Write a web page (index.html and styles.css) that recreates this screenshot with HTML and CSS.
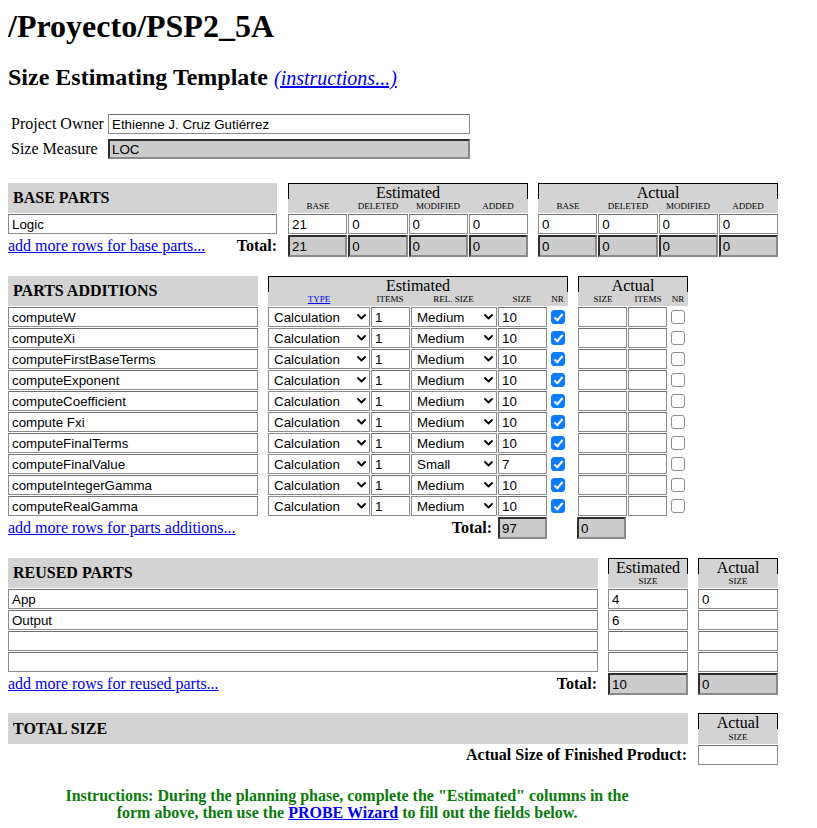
FILE: index.html
```html
<!DOCTYPE html>
<html lang="es">
<head>
<meta charset="utf-8">
<title>Size Estimating Template</title>
<link rel="stylesheet" href="styles.css">
</head>
<body>
<h1 class="title">/Proyecto/PSP2_5A</h1>
<h2 class="subtitle">Size Estimating Template <a class="instr" href="#">(instructions...)</a></h2>

<div class="owner">
  <div class="owner-row"><span class="lbl">Project Owner</span><input class="in owner-in" value="Ethienne J. Cruz Gutiérrez"></div>
  <div class="owner-row"><span class="lbl">Size Measure</span><input class="in ro owner-in" value="LOC" readonly></div>
</div>

<!-- BASE PARTS -->
<div class="sec sec-base">
  <div class="row head">
    <div class="sec-head w269">BASE PARTS</div>
    <div class="grp w240 ml11">
      <div class="grp-title">Estimated</div>
      <div class="subs"><span class="c60">BASE</span><span class="c60">DELETED</span><span class="c60">MODIFIED</span><span class="c60">ADDED</span></div>
    </div>
    <div class="grp w240 ml10">
      <div class="grp-title">Actual</div>
      <div class="subs"><span class="c60">BASE</span><span class="c60">DELETED</span><span class="c60">MODIFIED</span><span class="c60">ADDED</span></div>
    </div>
  </div>
  <div class="row">
    <input class="in w269" value="Logic">
    <div class="blk w240 ml11"><input class="in f1" value="21"><input class="in f1" value="0"><input class="in f1" value="0"><input class="in f1" value="0"></div>
    <div class="blk w240 ml10"><input class="in f1" value="0"><input class="in f1" value="0"><input class="in f1" value="0"><input class="in f1" value="0"></div>
  </div>
  <div class="row tot">
    <div class="tot-lbl w269"><a href="#">add more rows for base parts...</a><b>Total:</b></div>
    <div class="blk w240 ml11"><input class="in ro f1" value="21" readonly><input class="in ro f1" value="0" readonly><input class="in ro f1" value="0" readonly><input class="in ro f1" value="0" readonly></div>
    <div class="blk w240 ml10"><input class="in ro f1" value="0" readonly><input class="in ro f1" value="0" readonly><input class="in ro f1" value="0" readonly><input class="in ro f1" value="0" readonly></div>
  </div>
</div>

<!-- PARTS ADDITIONS -->
<div class="sec sec-add">
  <div class="row head">
    <div class="sec-head w250">PARTS ADDITIONS</div>
    <div class="grp w300 ml10">
      <div class="grp-title">Estimated</div>
      <div class="subs"><a class="c102" href="#">TYPE</a><span class="c40">ITEMS</span><span class="c87">REL. SIZE</span><span class="c50">SIZE</span><span class="c21">NR</span></div>
    </div>
    <div class="grp w110 ml10">
      <div class="grp-title">Actual</div>
      <div class="subs"><span class="c50">SIZE</span><span class="c40">ITEMS</span><span class="c20">NR</span></div>
    </div>
  </div>

  <div class="row">
    <input class="in w250" value="computeW">
    <div class="blk w300 ml10">
      <span class="sel w102"><select><option>Calculation</option></select><svg class="chev" width="9" height="6" viewBox="0 0 9 6"><path d="M1 1l3.5 3.5L8 1" fill="none" stroke="#000" stroke-width="1.8" stroke-linecap="round" stroke-linejoin="round"/></svg></span>
      <input class="in w39" value="1">
      <span class="sel w86"><select><option>Medium</option></select><svg class="chev" width="9" height="6" viewBox="0 0 9 6"><path d="M1 1l3.5 3.5L8 1" fill="none" stroke="#000" stroke-width="1.8" stroke-linecap="round" stroke-linejoin="round"/></svg></span>
      <input class="in w49" value="10">
      <span class="nr"><input type="checkbox" class="cb" checked></span>
    </div>
    <div class="blk w110 ml10"><input class="in w49" value=""><input class="in w39" value=""><span class="nr"><input type="checkbox" class="cb"></span></div>
  </div>
  <div class="row">
    <input class="in w250" value="computeXi">
    <div class="blk w300 ml10">
      <span class="sel w102"><select><option>Calculation</option></select><svg class="chev" width="9" height="6" viewBox="0 0 9 6"><path d="M1 1l3.5 3.5L8 1" fill="none" stroke="#000" stroke-width="1.8" stroke-linecap="round" stroke-linejoin="round"/></svg></span>
      <input class="in w39" value="1">
      <span class="sel w86"><select><option>Medium</option></select><svg class="chev" width="9" height="6" viewBox="0 0 9 6"><path d="M1 1l3.5 3.5L8 1" fill="none" stroke="#000" stroke-width="1.8" stroke-linecap="round" stroke-linejoin="round"/></svg></span>
      <input class="in w49" value="10">
      <span class="nr"><input type="checkbox" class="cb" checked></span>
    </div>
    <div class="blk w110 ml10"><input class="in w49" value=""><input class="in w39" value=""><span class="nr"><input type="checkbox" class="cb"></span></div>
  </div>
  <div class="row">
    <input class="in w250" value="computeFirstBaseTerms">
    <div class="blk w300 ml10">
      <span class="sel w102"><select><option>Calculation</option></select><svg class="chev" width="9" height="6" viewBox="0 0 9 6"><path d="M1 1l3.5 3.5L8 1" fill="none" stroke="#000" stroke-width="1.8" stroke-linecap="round" stroke-linejoin="round"/></svg></span>
      <input class="in w39" value="1">
      <span class="sel w86"><select><option>Medium</option></select><svg class="chev" width="9" height="6" viewBox="0 0 9 6"><path d="M1 1l3.5 3.5L8 1" fill="none" stroke="#000" stroke-width="1.8" stroke-linecap="round" stroke-linejoin="round"/></svg></span>
      <input class="in w49" value="10">
      <span class="nr"><input type="checkbox" class="cb" checked></span>
    </div>
    <div class="blk w110 ml10"><input class="in w49" value=""><input class="in w39" value=""><span class="nr"><input type="checkbox" class="cb"></span></div>
  </div>
  <div class="row">
    <input class="in w250" value="computeExponent">
    <div class="blk w300 ml10">
      <span class="sel w102"><select><option>Calculation</option></select><svg class="chev" width="9" height="6" viewBox="0 0 9 6"><path d="M1 1l3.5 3.5L8 1" fill="none" stroke="#000" stroke-width="1.8" stroke-linecap="round" stroke-linejoin="round"/></svg></span>
      <input class="in w39" value="1">
      <span class="sel w86"><select><option>Medium</option></select><svg class="chev" width="9" height="6" viewBox="0 0 9 6"><path d="M1 1l3.5 3.5L8 1" fill="none" stroke="#000" stroke-width="1.8" stroke-linecap="round" stroke-linejoin="round"/></svg></span>
      <input class="in w49" value="10">
      <span class="nr"><input type="checkbox" class="cb" checked></span>
    </div>
    <div class="blk w110 ml10"><input class="in w49" value=""><input class="in w39" value=""><span class="nr"><input type="checkbox" class="cb"></span></div>
  </div>
  <div class="row">
    <input class="in w250" value="computeCoefficient">
    <div class="blk w300 ml10">
      <span class="sel w102"><select><option>Calculation</option></select><svg class="chev" width="9" height="6" viewBox="0 0 9 6"><path d="M1 1l3.5 3.5L8 1" fill="none" stroke="#000" stroke-width="1.8" stroke-linecap="round" stroke-linejoin="round"/></svg></span>
      <input class="in w39" value="1">
      <span class="sel w86"><select><option>Medium</option></select><svg class="chev" width="9" height="6" viewBox="0 0 9 6"><path d="M1 1l3.5 3.5L8 1" fill="none" stroke="#000" stroke-width="1.8" stroke-linecap="round" stroke-linejoin="round"/></svg></span>
      <input class="in w49" value="10">
      <span class="nr"><input type="checkbox" class="cb" checked></span>
    </div>
    <div class="blk w110 ml10"><input class="in w49" value=""><input class="in w39" value=""><span class="nr"><input type="checkbox" class="cb"></span></div>
  </div>
  <div class="row">
    <input class="in w250" value="compute Fxi">
    <div class="blk w300 ml10">
      <span class="sel w102"><select><option>Calculation</option></select><svg class="chev" width="9" height="6" viewBox="0 0 9 6"><path d="M1 1l3.5 3.5L8 1" fill="none" stroke="#000" stroke-width="1.8" stroke-linecap="round" stroke-linejoin="round"/></svg></span>
      <input class="in w39" value="1">
      <span class="sel w86"><select><option>Medium</option></select><svg class="chev" width="9" height="6" viewBox="0 0 9 6"><path d="M1 1l3.5 3.5L8 1" fill="none" stroke="#000" stroke-width="1.8" stroke-linecap="round" stroke-linejoin="round"/></svg></span>
      <input class="in w49" value="10">
      <span class="nr"><input type="checkbox" class="cb" checked></span>
    </div>
    <div class="blk w110 ml10"><input class="in w49" value=""><input class="in w39" value=""><span class="nr"><input type="checkbox" class="cb"></span></div>
  </div>
  <div class="row">
    <input class="in w250" value="computeFinalTerms">
    <div class="blk w300 ml10">
      <span class="sel w102"><select><option>Calculation</option></select><svg class="chev" width="9" height="6" viewBox="0 0 9 6"><path d="M1 1l3.5 3.5L8 1" fill="none" stroke="#000" stroke-width="1.8" stroke-linecap="round" stroke-linejoin="round"/></svg></span>
      <input class="in w39" value="1">
      <span class="sel w86"><select><option>Medium</option></select><svg class="chev" width="9" height="6" viewBox="0 0 9 6"><path d="M1 1l3.5 3.5L8 1" fill="none" stroke="#000" stroke-width="1.8" stroke-linecap="round" stroke-linejoin="round"/></svg></span>
      <input class="in w49" value="10">
      <span class="nr"><input type="checkbox" class="cb" checked></span>
    </div>
    <div class="blk w110 ml10"><input class="in w49" value=""><input class="in w39" value=""><span class="nr"><input type="checkbox" class="cb"></span></div>
  </div>
  <div class="row">
    <input class="in w250" value="computeFinalValue">
    <div class="blk w300 ml10">
      <span class="sel w102"><select><option>Calculation</option></select><svg class="chev" width="9" height="6" viewBox="0 0 9 6"><path d="M1 1l3.5 3.5L8 1" fill="none" stroke="#000" stroke-width="1.8" stroke-linecap="round" stroke-linejoin="round"/></svg></span>
      <input class="in w39" value="1">
      <span class="sel w86"><select><option>Small</option></select><svg class="chev" width="9" height="6" viewBox="0 0 9 6"><path d="M1 1l3.5 3.5L8 1" fill="none" stroke="#000" stroke-width="1.8" stroke-linecap="round" stroke-linejoin="round"/></svg></span>
      <input class="in w49" value="7">
      <span class="nr"><input type="checkbox" class="cb" checked></span>
    </div>
    <div class="blk w110 ml10"><input class="in w49" value=""><input class="in w39" value=""><span class="nr"><input type="checkbox" class="cb"></span></div>
  </div>
  <div class="row">
    <input class="in w250" value="computeIntegerGamma">
    <div class="blk w300 ml10">
      <span class="sel w102"><select><option>Calculation</option></select><svg class="chev" width="9" height="6" viewBox="0 0 9 6"><path d="M1 1l3.5 3.5L8 1" fill="none" stroke="#000" stroke-width="1.8" stroke-linecap="round" stroke-linejoin="round"/></svg></span>
      <input class="in w39" value="1">
      <span class="sel w86"><select><option>Medium</option></select><svg class="chev" width="9" height="6" viewBox="0 0 9 6"><path d="M1 1l3.5 3.5L8 1" fill="none" stroke="#000" stroke-width="1.8" stroke-linecap="round" stroke-linejoin="round"/></svg></span>
      <input class="in w49" value="10">
      <span class="nr"><input type="checkbox" class="cb" checked></span>
    </div>
    <div class="blk w110 ml10"><input class="in w49" value=""><input class="in w39" value=""><span class="nr"><input type="checkbox" class="cb"></span></div>
  </div>
  <div class="row">
    <input class="in w250" value="computeRealGamma">
    <div class="blk w300 ml10">
      <span class="sel w102"><select><option>Calculation</option></select><svg class="chev" width="9" height="6" viewBox="0 0 9 6"><path d="M1 1l3.5 3.5L8 1" fill="none" stroke="#000" stroke-width="1.8" stroke-linecap="round" stroke-linejoin="round"/></svg></span>
      <input class="in w39" value="1">
      <span class="sel w86"><select><option>Medium</option></select><svg class="chev" width="9" height="6" viewBox="0 0 9 6"><path d="M1 1l3.5 3.5L8 1" fill="none" stroke="#000" stroke-width="1.8" stroke-linecap="round" stroke-linejoin="round"/></svg></span>
      <input class="in w49" value="10">
      <span class="nr"><input type="checkbox" class="cb" checked></span>
    </div>
    <div class="blk w110 ml10"><input class="in w49" value=""><input class="in w39" value=""><span class="nr"><input type="checkbox" class="cb"></span></div>
  </div>

  <div class="row tot">
    <div class="tot-lbl w490 pr6"><a href="#">add more rows for parts additions...</a><b>Total:</b></div>
    <input class="in ro w49" value="97" readonly>
    <span class="w30"></span>
    <input class="in ro w49" value="0" readonly>
  </div>
</div>

<!-- REUSED PARTS -->
<div class="sec sec-reused">
  <div class="row head">
    <div class="sec-head w590">REUSED PARTS</div>
    <div class="grp w80 ml10">
      <div class="grp-title">Estimated</div>
      <div class="subs"><span class="c80">SIZE</span></div>
    </div>
    <div class="grp w80 ml10">
      <div class="grp-title">Actual</div>
      <div class="subs"><span class="c80">SIZE</span></div>
    </div>
  </div>
  <div class="row"><input class="in w590" value="App"><input class="in w80 ml10" value="4"><input class="in w80 ml10" value="0"></div>
  <div class="row"><input class="in w590" value="Output"><input class="in w80 ml10" value="6"><input class="in w80 ml10" value=""></div>
  <div class="row"><input class="in w590" value=""><input class="in w80 ml10" value=""><input class="in w80 ml10" value=""></div>
  <div class="row"><input class="in w590" value=""><input class="in w80 ml10" value=""><input class="in w80 ml10" value=""></div>
  <div class="row tot">
    <div class="tot-lbl w600 pr11"><a href="#">add more rows for reused parts...</a><b>Total:</b></div>
    <input class="in ro w80" value="10" readonly>
    <input class="in ro w80 ml10" value="0" readonly>
  </div>
</div>

<!-- TOTAL SIZE -->
<div class="sec sec-total">
  <div class="row head head-tall">
    <div class="sec-head w680">TOTAL SIZE</div>
    <div class="grp w80 ml10">
      <div class="grp-title">Actual</div>
      <div class="subs"><span class="c80">SIZE</span></div>
    </div>
  </div>
  <div class="row">
    <div class="final-lbl w680"><b>Actual Size of Finished Product:</b></div>
    <input class="in w80 ml10" value="">
  </div>
</div>

<p class="instructions">Instructions: During the planning phase, complete the "Estimated" columns in the form above, then use the <a href="#">PROBE Wizard</a> to fill out the fields below.</p>
</body>
</html>
```

FILE: styles.css
```css
* { box-sizing: border-box; }

body {
  margin: 8px;
  font-family: "Liberation Serif", "Times New Roman", serif;
  font-size: 16px;
  color: #000;
  background: #fff;
}

a { color: #0000ee; }

.title {
  margin: 0 0 18px;
  font-size: 32px;
  line-height: 37px;
  font-weight: bold;
}

.subtitle {
  margin: 0;
  font-size: 24px;
  line-height: 29px;
  font-weight: bold;
}

.instr {
  font-size: 20px;
  font-style: italic;
  font-weight: normal;
}

/* owner block */
.owner { margin-top: 21px; display: flex; flex-direction: column; gap: 5px; }
.owner-row { display: flex; align-items: center; height: 20px; }
.lbl { width: 100px; padding-left: 3px; }
.owner-in { width: 362px; }

/* inputs */
.in {
  display: block;
  height: 20px;
  margin: 0;
  padding: 0 3px;
  border: 1px solid #8b8b8b;
  border-top-color: #6e6e6e;
  border-radius: 0;
  background: #fff;
  color: #000;
  font-family: "Liberation Sans", Arial, sans-serif;
  font-size: 13.33px;
  outline: none;
}
.in.ro {
  height: 22px;
  padding: 0 2px;
  border-width: 2px;
  border-color: #2f2f2f #8a8a8a #8a8a8a #2f2f2f;
  background: #cccccc;
}
.owner .in.ro { height: 20px; }

/* sections */
.sec { display: flex; flex-direction: column; gap: 1px; }
.sec-base { margin-top: 24px; }
.sec-add { margin-top: 19px; }
.sec-reused { margin-top: 19px; }
.sec-total { margin-top: 18px; }

.row { display: flex; align-items: center; }
.row.head { align-items: stretch; height: 30px; }
.row.head-tall { height: 31px; }

.sec-head {
  display: flex;
  align-items: center;
  padding-left: 5px;
  background: #d3d3d3;
  font-weight: bold;
  font-size: 16px;
}

.grp { background: #d3d3d3; display: flex; flex-direction: column; }
.grp-title {
  height: 16px;
  line-height: 17px;
  text-align: center;
  border: 1px solid #000;
  border-bottom: none;
  font-size: 16px;
}
.subs { display: flex; flex: 1; align-items: center; font-size: 9px; }
.subs > * { text-align: center; }

.blk { display: flex; gap: 1px; }
.f1 { flex: 1; min-width: 0; }

/* widths */
.w30 { width: 30px; flex: none; }
.w39 { width: 39px; }
.w49 { width: 49px; }
.w80 { width: 80px; }
.w86 { width: 86px; }
.w102 { width: 102px; }
.w110 { width: 110px; }
.w240 { width: 240px; }
.w250 { width: 250px; }
.w269 { width: 269px; }
.w300 { width: 300px; }
.w490 { width: 490px; }
.w590 { width: 590px; }
.w600 { width: 600px; }
.w680 { width: 680px; }
.ml10 { margin-left: 10px; }
.ml11 { margin-left: 11px; }
.pr6 { padding-right: 6px; }
.pr11 { padding-right: 11px; }

.c20 { width: 20px; }
.c21 { width: 21px; }
.c40 { width: 40px; }
.c50 { width: 50px; }
.c60 { width: 60px; }
.c80 { width: 80px; }
.c87 { width: 87px; }
.c102 { width: 102px; }

/* total rows */
.tot-lbl {
  display: flex;
  justify-content: space-between;
  align-items: center;
  height: 22px;
}
.row.tot { height: 22px; }
.tot-lbl b { font-weight: bold; }

.final-lbl { text-align: right; padding-right: 1px; }

/* selects */
.sel { position: relative; display: block; height: 20px; }
.sel select {
  -webkit-appearance: none;
  appearance: none;
  display: block;
  width: 100%;
  height: 20px;
  margin: 0;
  padding: 0 0 0 5px;
  border: 1px solid #8b8b8b;
  border-radius: 0;
  background: #fff;
  color: #000;
  font-family: "Liberation Sans", Arial, sans-serif;
  font-size: 13.33px;
}
.chev { position: absolute; right: 4px; top: 7px; }

/* checkboxes */
.nr { width: 20px; height: 20px; display: flex; align-items: center; justify-content: center; }
.cb {
  -webkit-appearance: none;
  appearance: none;
  position: relative;
  width: 14px;
  height: 14px;
  margin: 0;
  border: 1px solid #8e8e8e;
  border-radius: 3px;
  background: #fff;
}
.cb:checked { background: #0b7cff; border-color: #0b7cff; }
.cb:checked::after {
  content: "";
  position: absolute;
  left: 4px;
  top: 1px;
  width: 3px;
  height: 7px;
  border: solid #fff;
  border-width: 0 2px 2px 0;
  transform: rotate(40deg);
}

/* instructions */
.instructions {
  width: 580px;
  margin: 22px 0 0 49px;
  text-align: center;
  font-weight: bold;
  color: #0a7a0a;
  line-height: 17px;
}
```
